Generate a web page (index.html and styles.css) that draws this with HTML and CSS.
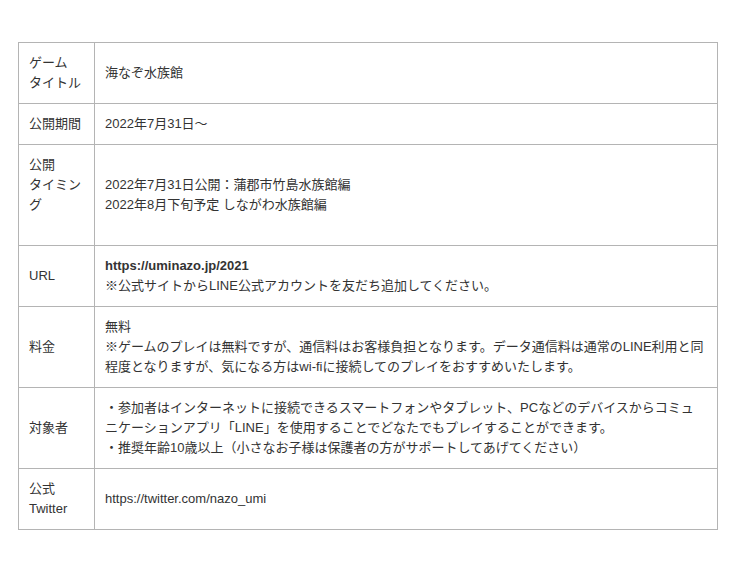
FILE: index.html
```html
<!DOCTYPE html>
<html lang="ja">
<head>
    <meta charset="UTF-8">
    <title>海なぞ水族館</title>
<link rel="stylesheet" href="styles.css">
</head>
<body>
	<main>
		<table class="info">
			<tr>
				<th>ゲーム<br>タイトル</th>
				<td>海なぞ水族館</td>
			</tr>
			<tr>
				<th>公開期間</th>
				<td>2022年7月31日〜</td>
			</tr>
			<tr>
				<th>公開<br>タイミング<br>&nbsp;</th>
				<td>&nbsp;<br>2022年7月31日公開：蒲郡市竹島水族館編<br>2022年8月下旬予定 しながわ水族館編<br>&nbsp;</td>
			</tr>
			<tr>
				<th>URL</th>
				<td><b>https://uminazo.jp/2021</b><br>※公式サイトからLINE公式アカウントを友だち追加してください。</td>
			</tr>
			<tr>
				<th>料金</th>
				<td>無料<br>※ゲームのプレイは無料ですが、通信料はお客様負担となります。データ通信料は通常のLINE利用と同程度となりますが、気になる方はwi-fiに接続してのプレイをおすすめいたします。</td>
			</tr>
			<tr>
				<th>対象者</th>
				<td>・参加者はインターネットに接続できるスマートフォンやタブレット、PCなどのデバイスからコミュニケーションアプリ「LINE」を使用することでどなたでもプレイすることができます。<br>・推奨年齢10歳以上（小さなお子様は保護者の方がサポートしてあげてください）</td>
			</tr>
			<tr>
				<th>公式<br>Twitter</th>
				<td>https://twitter.com/nazo_umi</td>
			</tr>
		</table>
	</main>
</body>
</html>
```
FILE: styles.css
```css
*{padding:0;margin:0;box-sizing:border-box;}
body{
	background:#fff;
	color:#333;
	font-family:"Liberation Sans","Noto Sans CJK JP",sans-serif;
	font-size:13px;
	line-height:20px;
}
main{
	padding:42px 0 0 18px;
}
.info{
	width:700px;
	border-collapse:collapse;
	border:1px solid #b4b4b4;
}
.info th,
.info td{
	border:1px solid #b4b4b4;
	padding:10px 13px 10px 10px;
	vertical-align:middle;
	text-align:left;
	font-weight:normal;
}
.info th{
	width:76px;
	padding-right:10px;
}
.info td b{
	font-weight:bold;
}
```
